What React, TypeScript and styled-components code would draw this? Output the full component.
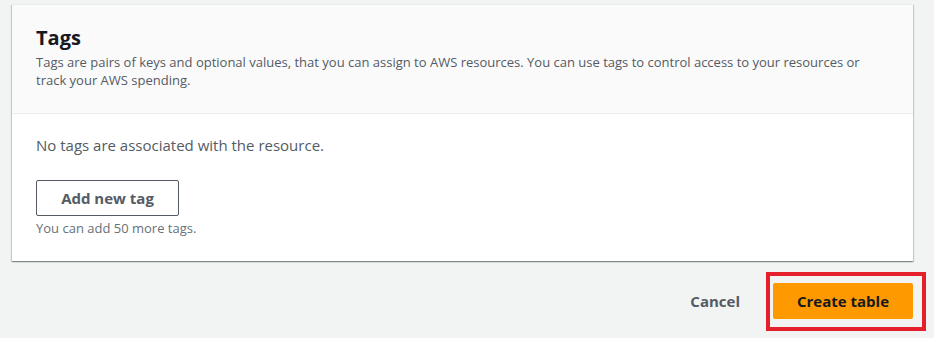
import React from "react";
import styled, { createGlobalStyle } from "styled-components";

const Global = createGlobalStyle`
  html, body { margin: 0; padding: 0; background: #f2f3f3; }
  body { font-family: "Open Sans", "Noto Sans", Arial, sans-serif; -webkit-font-smoothing: antialiased; }
`;

const Page = styled.div`
  width: 934px;
  height: 338px;
  box-sizing: border-box;
  padding: 4px 21px 0 12px;
  display: flex;
  flex-direction: column;
  position: relative;
  overflow: hidden;
`;

const Card = styled.section`
  background: #ffffff;
  border-top: 1px solid #eaeded;
  box-shadow: 0 1px 1px 0 rgba(0, 28, 36, 0.3), 1px 1px 1px 0 rgba(0, 28, 36, 0.15), -1px 1px 1px 0 rgba(0, 28, 36, 0.15);
`;

const CardHeader = styled.header`
  background: #fafafa;
  border-bottom: 1px solid #eaeded;
  padding: 19px 24px 23px;
  height: 109px;
  box-sizing: border-box;
`;

const Title = styled.h2`
  margin: 0;
  font-size: 20px;
  line-height: 28px;
  font-weight: 700;
  color: #16191f;
`;

const Description = styled.p`
  margin: 1px 0 0;
  font-size: 13px;
  line-height: 18px;
  color: #545b64;
`;

const CardBody = styled.div`
  padding: 20px 24px 24px;
  display: flex;
  flex-direction: column;
`;

const EmptyText = styled.p`
  margin: 0;
  font-size: 15px;
  line-height: 22px;
  color: #545b64;
`;

const OutlineButton = styled.button`
  margin-top: 24px;
  align-self: flex-start;
  width: 143px;
  height: 36px;
  box-sizing: border-box;
  border: 1px solid #545b64;
  border-radius: 2px;
  background: #ffffff;
  color: #545b64;
  font-family: inherit;
  font-size: 15px;
  font-weight: 700;
  cursor: pointer;
`;

const Hint = styled.div`
  margin-top: 4px;
  font-size: 13px;
  line-height: 17px;
  color: #687078;
`;

const Actions = styled.div`
  display: flex;
  justify-content: flex-end;
  align-items: center;
  gap: 33px;
  margin-top: 22px;
`;

const LinkButton = styled.button`
  border: none;
  background: transparent;
  color: #545b64;
  font-family: inherit;
  font-size: 15px;
  font-weight: 700;
  padding: 0;
  cursor: pointer;
`;

const PrimaryButton = styled.button`
  width: 140px;
  height: 36px;
  border: none;
  border-radius: 2px;
  background: #ff9900;
  color: #16191f;
  font-family: inherit;
  font-size: 15px;
  font-weight: 700;
  cursor: pointer;
`;

const Highlight = styled.div`
  position: absolute;
  left: 766px;
  top: 272px;
  width: 160px;
  height: 59px;
  box-sizing: border-box;
  border: 4px solid #e4202a;
  pointer-events: none;
`;

export default function App() {
  return (
    <>
      <Global />
      <Page>
        <Card>
          <CardHeader>
            <Title>Tags</Title>
            <Description>
              Tags are pairs of keys and optional values, that you can assign to AWS resources. You can use tags to control access to your resources or track your AWS spending.
            </Description>
          </CardHeader>
          <CardBody>
            <EmptyText>No tags are associated with the resource.</EmptyText>
            <OutlineButton>Add new tag</OutlineButton>
            <Hint>You can add 50 more tags.</Hint>
          </CardBody>
        </Card>
        <Actions>
          <LinkButton>Cancel</LinkButton>
          <PrimaryButton>Create table</PrimaryButton>
        </Actions>
        <Highlight />
      </Page>
    </>
  );
}
